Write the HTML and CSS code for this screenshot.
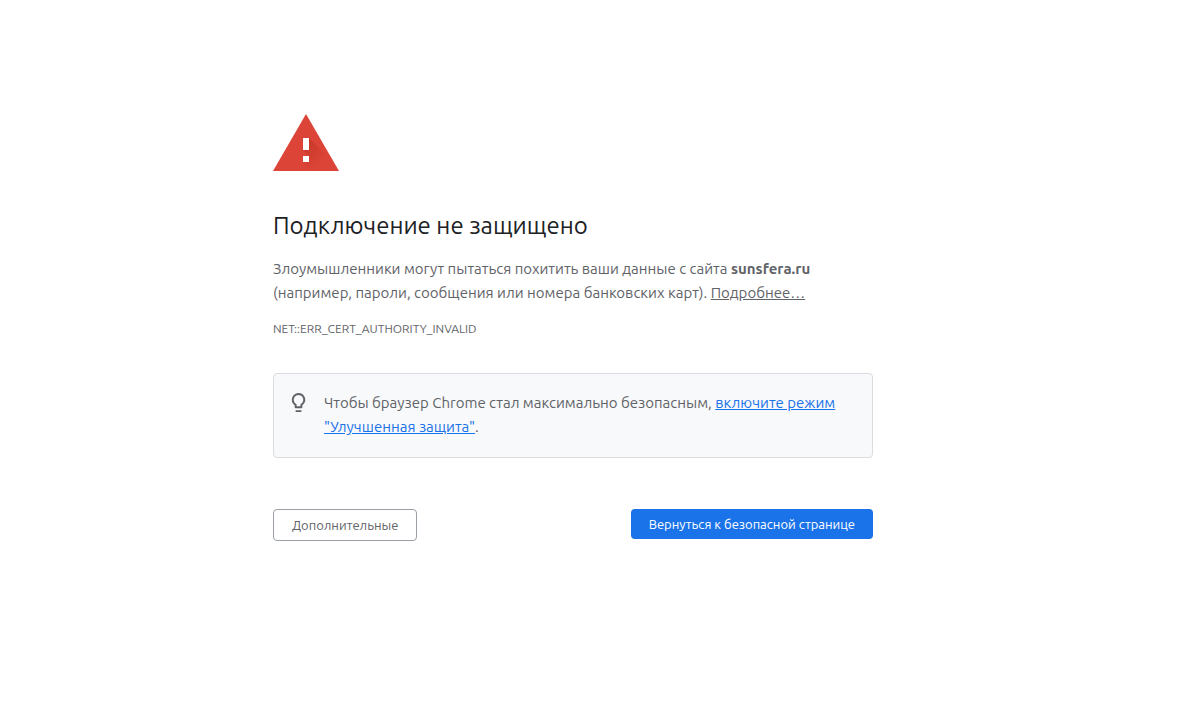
FILE: index.html
```html
<!DOCTYPE html>
<html lang="ru">
<head>
  <meta charset="UTF-8">
  <meta name="viewport" content="width=device-width, initial-scale=1">
  <title>Ошибка нарушения конфиденциальности</title>
  <link rel="stylesheet" href="styles.css">
</head>
<body>
  <main class="interstitial">
    <svg class="icon" viewBox="0 0 66 57" aria-hidden="true">
      <defs>
        <linearGradient id="shade" gradientUnits="userSpaceOnUse" x1="30" y1="30" x2="48" y2="48">
          <stop offset="0" stop-color="#a52714" stop-opacity=".4"/>
          <stop offset="1" stop-color="#a52714" stop-opacity="0"/>
        </linearGradient>
      </defs>
      <path fill="#db4437" d="M33 0l33 57H0z"/>
      <path fill="url(#shade)" d="M36 24l19 19 8 14H39l-9-9 6-6-6-6z"/>
      <path fill="#fff" d="M30 24h6v12h-6zM30 42h6v6h-6z"/>
    </svg>

    <h1>Подключение не защищено</h1>
    <p class="message">Злоумышленники могут пытаться похитить ваши данные с сайта <strong>sunsfera.ru</strong> (например, пароли, сообщения или номера банковских карт). <a href="#">Подробнее…</a></p>
    <div class="error-code">NET::ERR_CERT_AUTHORITY_INVALID</div>

    <div class="suggestion">
      <svg class="bulb" viewBox="0 0 24 24" aria-hidden="true">
        <path fill="#5f6368" d="M12 2a7 7 0 0 0-7 7c0 2.380 1.190 4.470 3 5.740V17a1 1 0 0 0 1 1h6a1 1 0 0 0 1-1v-2.260A7 7 0 0 0 12 2zm2 11.700V16h-4v-2.300A5 5 0 1 1 14 13.700zM9 20h6v2H9z"/>
      </svg>
      <p>Чтобы браузер Chrome стал максимально безопасным, <a href="#">включите режим "Улучшенная защита"</a>.</p>
    </div>

    <div class="buttons">
      <button class="secondary" type="button">Дополнительные</button>
      <button class="primary" type="button">Вернуться к безопасной странице</button>
    </div>
  </main>
</body>
</html>
```

FILE: styles.css
```css
body {
  margin: 0;
  padding-right: 52px;
  background: #fff;
  color: #5f6368;
  font-family: Ubuntu, "Noto Sans", sans-serif;
  font-size: 15px;
  line-height: 24px;
}
.interstitial {
  box-sizing: border-box;
  width: 100%;
  max-width: 600px;
  margin: 0 auto;
  padding-top: 114px;
}
.icon {
  display: block;
  width: 66px;
}
h1 {
  margin: 40px 0 16px;
  color: #202124;
  font-size: 24px;
  font-weight: normal;
  line-height: 30px;
}
p {
  margin: 0;
}
.message a {
  color: #5f6368;
}
.error-code {
  margin-top: 14px;
  font-size: 12px;
  line-height: 20px;
}
.suggestion {
  display: flex;
  gap: 14px;
  margin-top: 34px;
  padding: 17px 13px 18px;
  border: 1px solid #dadce0;
  border-radius: 4px;
  background: #f8f9fa;
}
.suggestion a {
  color: #1a73e8;
}
.bulb {
  flex: none;
  width: 23px;
  height: 23px;
}
.buttons {
  display: flex;
  justify-content: space-between;
  align-items: flex-start;
  margin-top: 51px;
}
button {
  padding: 6px 18px;
  border: 0;
  border-radius: 4px;
  font: inherit;
  font-size: 13px;
  line-height: 18px;
  cursor: pointer;
}
.secondary {
  border: 1px solid #9aa0a6;
  background: #fff;
  color: #5f6368;
}
.primary {
  background: #1a73e8;
  color: #fff;
}
```
